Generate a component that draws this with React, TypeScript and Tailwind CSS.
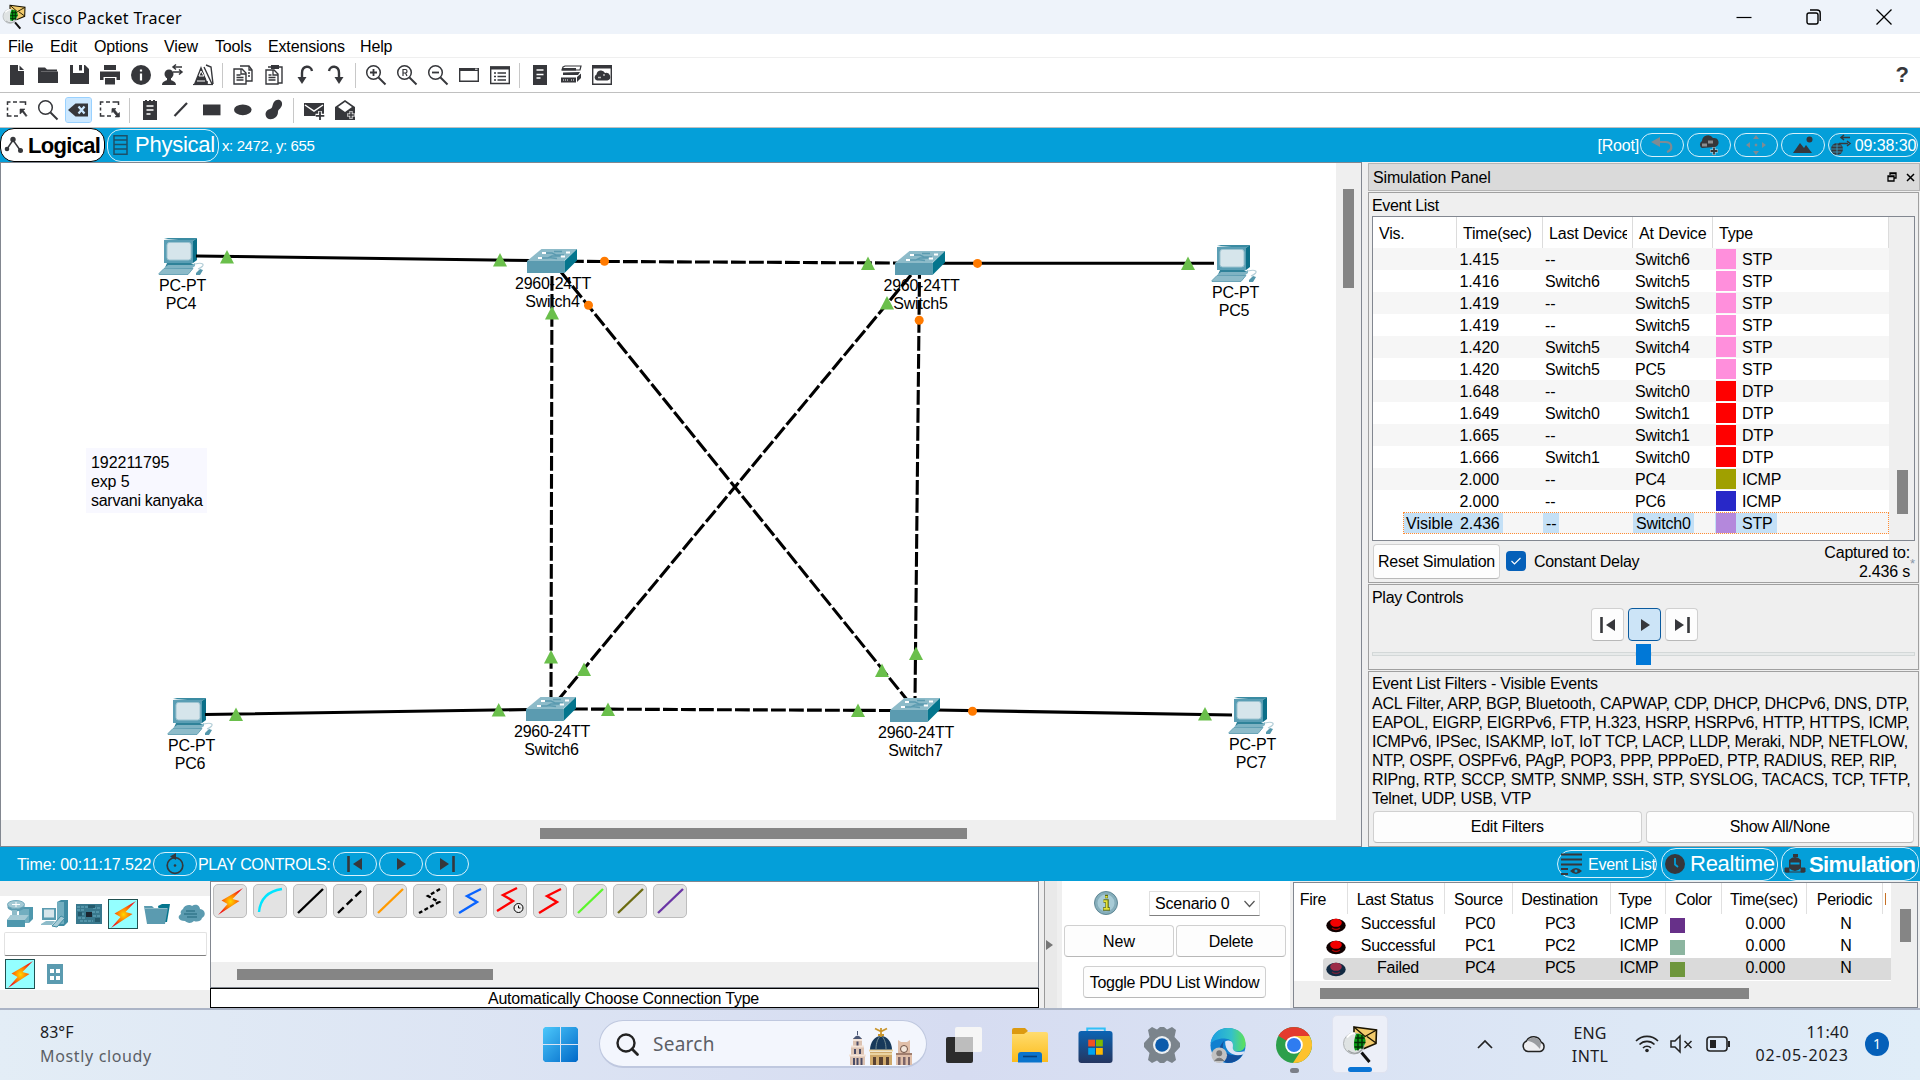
import React from "react";

const DARK = "#36373b";

type IconProps = { children: React.ReactNode; w?: number; h?: number; vb?: string };
const Svg = ({ children, w = 22, h = 22, vb = "0 0 22 22" }: IconProps) => (
  <svg width={w} height={h} viewBox={vb} fill="none" className="block shrink-0 overflow-visible">
    {children}
  </svg>
);

/* ---------- toolbar icons ---------- */
const fileIcons: React.ReactNode[] = [
  <Svg><path d="M4 1h8v6h6v14H4z" fill={DARK} /><path d="M13.500 1.500 18 6h-4.500z" fill={DARK} /></Svg>,
  <Svg><path d="M1 3.500h7l2 2h10v2H4L1 17z" fill={DARK} /><path d="M1 7.500h20V19H1z" fill={DARK} /></Svg>,
  <Svg><path d="M2 1h3v8h11V1h1l4 4v15H2z" fill={DARK} /><path d="M11 1h3v5.500h-3z" fill={DARK} /></Svg>,
  <Svg><path d="M5 1h12v5H5zM1 7.500h20V16h-3.500v-3h-13v3H1z" fill={DARK} /><path d="M6 14h10v6.500H6z" fill={DARK} /></Svg>,
  <Svg><circle cx="11" cy="11" r="10" fill={DARK} /><path d="M11 5.500v2M11 9.500v7" stroke="#fff" strokeWidth="2.200" /></Svg>,
  <Svg><circle cx="8" cy="10" r="4.500" fill={DARK} /><path d="M1 21c0-3 3-4 5-5v-3h4v3c2 1 5 2 5 5z" fill={DARK} /><path d="M12 3h9M15 .500 12 3l3 2.500M12 8h9M18 5.500 21 8l-3 2.500" stroke={DARK} strokeWidth="1.500" /></Svg>,
  <Svg><path d="M2 20 9 2l7 18z" fill={DARK} /><path d="m12 3 8 17M14 1l5 2 2 17M5 15h9M4 18h12" stroke={DARK} strokeWidth="1.400" /><path d="M7 12 9 7l3 5zM5 17h8" stroke="#fff" strokeWidth="1" /><path d="M1 20.500h20" stroke={DARK} strokeWidth="1.200" /></Svg>,
];
const editIcons: React.ReactNode[] = [
  <Svg><path d="M8 2h9l3 4v11h-6M2 5h8l4 4v11H2z" stroke={DARK} strokeWidth="1.400" /><path d="M9 5v5h5M17 2v4h3M4.500 11h4M4.500 13.500h7M4.500 16h7M16 9h2M16 12h2" stroke={DARK} strokeWidth="1.300" /></Svg>,
  <Svg><path d="M5 3h14v16h-4M3 6h8l4 4v10H3z" stroke={DARK} strokeWidth="1.400" /><path d="M8 1h8v4H8z" fill={DARK} /><path d="M10 6v5h5M5.500 11h3M5.500 13.500h7M5.500 16h7" stroke={DARK} strokeWidth="1.300" /></Svg>,
  <Svg><path d="M18 7c-1-6-10-6-10 2v6" stroke={DARK} strokeWidth="2.400" /><path d="M3.500 13h9L8 20z" fill={DARK} /></Svg>,
  <Svg><path d="M4 7c1-6 10-6 10 2v6" stroke={DARK} strokeWidth="2.400" /><path d="M9.500 13h9L14 20z" fill={DARK} /></Svg>,
];
const Lens = ({ children }: { children?: React.ReactNode }) => (
  <Svg><circle cx="8.500" cy="8.500" r="6.800" stroke={DARK} strokeWidth="1.500" /><path d="m13.500 13.500 7 7" stroke={DARK} strokeWidth="2" />{children}</Svg>
);
const viewIcons: React.ReactNode[] = [
  <Lens><path d="M5 8.500h7M8.500 5v7" stroke={DARK} strokeWidth="1.800" /></Lens>,
  <Lens><path d="M7 12V5.500h2.500q1.500 0 1.500 1.700T9.500 9H7m2.500 0L11 12" stroke={DARK} strokeWidth="1.200" /></Lens>,
  <Lens><path d="M5 8.500h7" stroke={DARK} strokeWidth="1.800" /></Lens>,
  <Svg><path d="M1.700 4.700h18.600v12.600H1.700z" stroke={DARK} strokeWidth="1.400" /><path d="M1 4h20v3H1z" fill={DARK} /><path d="M17 5.200h2.500" stroke="#fff" /></Svg>,
  <Svg><path d="M1.700 3h18.600v16.500H1.700z" stroke={DARK} strokeWidth="1.400" /><path d="M1 2.500h20V5.500H1z" fill={DARK} /><path d="M5 9h2M5 12.500h2M5 16h2M8.500 9H17M8.500 12.500H17M8.500 16H17" stroke={DARK} strokeWidth="1.700" /></Svg>,
];
const deviceIcons: React.ReactNode[] = [
  <Svg><path d="M4 1h14v20H4z" fill={DARK} /><path d="M7.500 6h7M7.500 10.500h7M7.500 14h4" stroke="#fff" strokeWidth="1.500" /></Svg>,
  <Svg><path d="m3 3 2-1h16l-1 4H2z" stroke={DARK} strokeWidth="1.200" /><path d="M2 4h14v2.500H2z" fill={DARK} /><path d="m3 8.500 17-.5-2 3H3z" fill={DARK} /><path d="M1 13.500h15v5H1zM17 13l4-3.500v4.500l-4 4z" fill={DARK} /><path d="M3 16h6M11 16h4" stroke="#fff" strokeDasharray="1 1" /></Svg>,
  <Svg><path d="M1.700 1.700h18.600v18.600H1.700z" stroke={DARK} strokeWidth="1.400" /><path d="M1 1h20v3.500H1z" fill={DARK} /><path d="M6 16.500a3.200 3.200 0 0 1-.5-6 4.500 4.500 0 0 1 8.500-1.500 3.800 3.800 0 0 1 2.500 7.500z" fill={DARK} /><path d="M7 13.500h3M12 11h2" stroke="#bbb" strokeWidth="1.500" /></Svg>,
];
const Marquee = ({ d }: { d: string }) => (
  <Svg><path d="M1.500 6V3h3M7 3h4M13.500 3h6v3M1.500 8.500v3M1.500 14v3h4M8 17h4" stroke={DARK} strokeWidth="1.500" /><path d={d} fill={DARK} stroke={DARK} strokeWidth=".6" /></Svg>
);
const selectIcons: React.ReactNode[] = [
  <Marquee d="M14 10h5l-1.600 1.600 3.600 5-1 1-3.600-4.600L14 15z" />,
  <Lens />,
  <Svg><path d="M7.500 4.500H20v13H7.500L0 11z" fill={DARK} /><path d="m10.500 7.500 6 7M16.500 7.500l-6 7" stroke="#cce8ff" strokeWidth="2.200" /></Svg>,
  <Marquee d="M13 9.500h4l-1.300 1.300 3.300 4L20.500 13.500v4.500h-4.500l1.300-1.500-3.300-4-1.200 1.200z" />,
];
const drawIcons: React.ReactNode[] = [
  <Svg><path d="M4 2h2V1h2v1h2V1h2v1h2V1h2v1h2v19H4z" fill={DARK} /><path d="M7.500 7h7M7.500 11h7M7.500 15h4" stroke="#fff" strokeWidth="1.400" /></Svg>,
  <Svg><path d="M4.500 17 17 4" stroke={DARK} strokeWidth="2.200" /></Svg>,
  <Svg><path d="M2 5.500h17.500v10.800H2z" fill={DARK} /></Svg>,
  <Svg><ellipse cx="10.800" cy="10.800" rx="8.800" ry="5.400" fill={DARK} /></Svg>,
  <Svg><path d="M11 3c3-4 9-2 8 3-1 4-4 4-4 7 0 6-7 9-11 6-3-4-1-8 3-9 3-1 2-4 4-7z" fill={DARK} /></Svg>,
];
const pduIcons: React.ReactNode[] = [
  <Svg><path d="M1 4h20v13H1z" fill={DARK} /><path d="m2 6 9 6 9-6" stroke="#fff" strokeWidth="1.500" /><path d="M17 12v9M12.500 16.500h9" stroke="#fff" strokeWidth="3.600" /><path d="M17 12.500v8.500M12.800 16.800h8.500" stroke={DARK} strokeWidth="1.800" /></Svg>,
  <Svg><path d="M1 8 11 1l10 7v13H1z" fill={DARK} /><path d="m11 3 7 5-7 5-7-5z" fill="#fff" /><path d="M17 12v8M13 16h8" stroke="#fff" strokeWidth="3" /><path d="M17 12.500v7M13.500 16h7" stroke={DARK} strokeWidth="1.500" /></Svg>,
];

const Cells = ({ items, active = -1 }: { items: React.ReactNode[]; active?: number }) => (
  <>
    {items.map((it, i) => (
      <div key={i} className="flex h-full w-[31px] items-center justify-center">
        <div className={i === active ? "flex h-[24px] w-[25px] items-center justify-center rounded-[2px] bg-[#cce8ff] outline outline-[#99d1ff]" : ""}>{it}</div>
      </div>
    ))}
  </>
);
const Sep = () => <div className="mx-[4px] h-[25px] w-px bg-[#c8c8c8]" />;

const TracerLogo = ({ w, h }: { w: number; h: number }) => (
  <Svg w={w} h={h} vb="0 0 34 36">
    <path d="M11 .500 33.500 3.500 33 17l-12 5-10-8z" fill="#f2cb6c" stroke="#1b1400" strokeWidth="1.600" />
    <path d="m11 .500 11 9.500L33.500 3.500M24 10l9 6.500" stroke="#1b1400" strokeWidth="1.400" />
    <circle cx="11" cy="17" r="10.500" fill="#dfe3e3" stroke="#aeb2b4" />
    <path d="M4 11q4-5 8-4" stroke="#fff" strokeWidth="2" />
    <path d="M13 7.500c4-1 9 1 9.500 6.500 0 5-4 9-10.500 10-2-5-1-11 1-16.500z" fill="#0a9a16" />
    <path d="M12.500 11.500h9M11.500 16h11M11.500 20.500h9M15 8v16M19 8.500v14" stroke="#032d05" strokeWidth="1.400" />
    <path d="M5 24q8 6 14-1" stroke="#9ea2a4" strokeWidth="1.200" />
    <path d="m18.500 26 8 9.500" stroke="#111" strokeWidth="3" />
  </Svg>
);

const PrevIcon = () => <Svg w={20} h={18} vb="0 0 20 18"><path d="M3.500 1v16" stroke={DARK} strokeWidth="2.600" /><path d="M17 3v12L8 9z" fill={DARK} /></Svg>;
const PlayIcon = () => <Svg w={20} h={18} vb="0 0 20 18"><path d="M6 3v12l9-6z" fill={DARK} /></Svg>;
const NextIcon = () => <Svg w={20} h={18} vb="0 0 20 18"><path d="M16.500 1v16" stroke={DARK} strokeWidth="2.600" /><path d="M3 3v12l9-6z" fill={DARK} /></Svg>;

/* ---------- topology ---------- */
const Pc = ({ x, y, name, dx = 1 }: { x: number; y: number; name: string; dx?: number }) => (
  <g transform={`translate(${x} ${y})`}>
    <path d="m5 1 4-1h29l-4 3z" fill="#3a8ba2" />
    <path d="M38 0v22l-4 3V3z" fill="#0b6f88" />
    <rect x="5" y="2" width="29" height="23" fill="#5a9eb4" />
    <rect x="8" y="4.500" width="24" height="17.500" rx="2.500" fill="#d6e5eb" stroke="#9cc3d0" />
    <path d="M8 25h24l4 2-3 2.500H6z" fill="#2f8299" />
    <path d="m5 30 4-3h24l3-2v3l-4 3z" fill="#7fb3c3" />
    <path d="m0 35.500 5-5h29l-5 6H0z" fill="#8dbbc9" stroke="#5497ac" strokeWidth=".8" />
    <path d="M36 26c8-2 12 1 3 5" fill="none" stroke="#b5cfd8" strokeWidth="1.200" />
    <path d="m37 35 4-4 3 1-3 5h-4z" fill="#5497ac" />
    <text x={22.500 + dx} y={53} textAnchor="middle" className="tracking-[-0.2px]">PC-PT</text>
    <text x={21 + dx} y={71} textAnchor="middle" className="tracking-[-0.2px]">{name}</text>
  </g>
);
const SwitchNode = ({ x, y }: { x: number; y: number }) => (
  <g transform={`translate(${x} ${y})`}>
    <path d="M0 12 14.500 0H50L37 12z" fill="#8dbbc9" />
    <path d="M0 12h37.500v12H0z" fill="#5b9bb0" />
    <path d="M37.500 12 50 0v11.500L37.500 24z" fill="#04758d" />
    <path d="m17 4 8 0 4 2h8M13 9h8l4-2h8M27 2.500h8M22 8.500l8 1" stroke="#5b9bb0" strokeWidth="1.500" fill="none" />
    <path d="m15 4 4 0M11 9h4M39 3.500h4M34 7.500h4" stroke="#fff" strokeWidth="1.800" />
  </g>
);
const up = [[227, 257], [500, 260], [552, 313], [868, 263.5], [887, 303], [1188, 263.5], [236, 714.5], [498.7, 710], [608, 709.500], [551, 657], [584, 669.500], [858, 710.500], [882, 670.500], [916, 653.500], [1205, 714]];
const dots = [[604.5, 261.3], [588.5, 305.3], [977.5, 263.4], [919.2, 320.3], [972.5, 711.2]];

const Topology = () => (
  <svg width="1335" height="657" viewBox="1 163 1335 657" className="block shrink-0 bg-white font-['Liberation_Sans',sans-serif] text-[16px]">
    <Pc x={159} y={238} name="PC4" />
    <Pc x={1212} y={245} name="PC5" />
    <Pc x={168} y={698} name="PC6" />
    <Pc x={1229} y={697} name="PC7" />
    <g textAnchor="middle" className="tracking-[-0.25px]">
      <text x="553" y="288.500">2960-24TT</text><text x="552.500" y="306.500">Switch4</text>
      <text x="921.500" y="290.500">2960-24TT</text><text x="920.500" y="308.500">Switch5</text>
      <text x="552" y="736.500">2960-24TT</text><text x="551.500" y="754.500">Switch6</text>
      <text x="916" y="737.500">2960-24TT</text><text x="915.500" y="755.500">Switch7</text>
    </g>
    <g stroke="#000" strokeWidth="3.100">
      <path d="M196 256 530 260.500M940 263.300h274M205 714.500 530 709.500M936 710l296 5" />
      <g strokeDasharray="14.800 3.200">
        <path d="M569 261.300 898 263" /><path d="M573 709 892 710.500" />
        <path d="M552 267 551 699" strokeDashoffset="9" /><path d="M919.500 273 915 700" strokeDashoffset="9" />
        <path d="M561 272 908 701" /><path d="M911 275 558 700" />
      </g>
    </g>
    <SwitchNode x={527} y={249} /><SwitchNode x={895} y={251} />
    <SwitchNode x={526} y={697} /><SwitchNode x={890} y={698} />
    {up.map(([x, y], i) => <path key={i} d={`M${x} ${y - 7}l7 13.500h-14z`} fill="#6abf4b" />)}
    {dots.map(([x, y], i) => <circle key={i} cx={x} cy={y} r="4.500" fill="#ff7a00" />)}
    <rect x="86" y="448" width="121" height="65" fill="#f8f8ff" />
    <g>
      <text x="91" y="468" className="tracking-[-0.05px]">192211795</text><text x="91" y="487" className="tracking-[-0.15px]">exp 5</text><text x="91" y="506" className="tracking-[-0.27px]">sarvani kanyaka</text>
    </g>
  </svg>
);

/* ---------- simulation panel ---------- */
const PINK = "#ff8fdc", RED = "#ff0000";
const events: [string, string, string, string, string][] = [
  ["1.415", "--", "Switch6", PINK, "STP"],
  ["1.416", "Switch6", "Switch5", PINK, "STP"],
  ["1.419", "--", "Switch5", PINK, "STP"],
  ["1.419", "--", "Switch5", PINK, "STP"],
  ["1.420", "Switch5", "Switch4", PINK, "STP"],
  ["1.420", "Switch5", "PC5", PINK, "STP"],
  ["1.648", "--", "Switch0", RED, "DTP"],
  ["1.649", "Switch0", "Switch1", RED, "DTP"],
  ["1.665", "--", "Switch1", RED, "DTP"],
  ["1.666", "Switch1", "Switch0", RED, "DTP"],
  ["2.000", "--", "PC4", "#a0a000", "ICMP"],
  ["2.000", "--", "PC6", "#2828c8", "ICMP"],
];
const filterLines: [string, string][] = [
  ["ACL Filter, ARP, BGP, Bluetooth, CAPWAP, CDP, DHCP, DHCPv6, DNS, DTP,", "tracking-[-0.2px]"],
  ["EAPOL, EIGRP, EIGRPv6, FTP, H.323, HSRP, HSRPv6, HTTP, HTTPS, ICMP,", "tracking-[-0.29px]"],
  ["ICMPv6, IPSec, ISAKMP, IoT, IoT TCP, LACP, LLDP, Meraki, NDP, NETFLOW,", "tracking-[-0.28px]"],
  ["NTP, OSPF, OSPFv6, PAgP, POP3, PPP, PPPoED, PTP, RADIUS, REP, RIP,", "tracking-[-0.29px]"],
  ["RIPng, RTP, SCCP, SMTP, SNMP, SSH, STP, SYSLOG, TACACS, TCP, TFTP,", "tracking-[-0.25px]"],
  ["Telnet, UDP, USB, VTP", "tracking-[-0.28px]"],
];
const btn = "flex items-center justify-center rounded-[4px] border border-[#d0d0d0] border-b-[#b8b8b8] bg-[#fdfdfd] whitespace-nowrap";

const EventRow = ({ e, shade }: { e: string[]; shade: boolean }) => (
  <div className={`flex h-[22px] w-[516px] items-center leading-[22px] ${shade ? "bg-[#f6f6f6]" : "bg-white"}`}>
    <div className="w-[126px] pt-px text-right tracking-[-0.1px]">{e[0]}</div>
    <div className="w-[90px] pt-px pl-[46px] whitespace-nowrap">{e[1]}</div>
    <div className="w-[127px] pt-px pl-[46px] whitespace-nowrap">{e[2]}</div>
    <div className="h-[20px] w-[20px]" style={{ background: e[3] }} />
    <div className="pt-px pl-[6px]">{e[4]}</div>
  </div>
);

const SimulationPanel = () => (
  <div className="flex w-[552px] flex-col bg-[#efefef] tracking-[-0.2px]">
    <div className="mt-px flex h-[28px] items-center border border-[#b5b5b5] bg-[#dadada] pl-[4px]">
      <span className="flex-1 pt-[2px] tracking-[-0.15px]">Simulation Panel</span>
      <Svg w={10} h={10} vb="0 0 10 10"><path d="M3 3V1h6v5H7M1 4h6v5H1zM3 1.500h6M1 4.500h6" stroke="#000" strokeWidth="1.300" /></Svg>
      <div className="mr-[4px] ml-[9px]"><Svg w={9} h={9} vb="0 0 9 9"><path d="m1 1 7 7M8 1 1 8" stroke="#000" strokeWidth="1.500" /></Svg></div>
    </div>
    <div className="mt-[1px] mr-[1px] flex h-[391px] flex-col border border-[#a0a0a0] px-[3px]">
      <div className="h-[23px] leading-[25px] tracking-[-0.35px]">Event List</div>
      <div className="flex h-[325px] border border-[#828790]">
        <div className="flex w-[516px] flex-col bg-white">
          <div className="flex h-[31px] shrink-0 items-center leading-[34px]">
            <div className="h-full w-[84px] border-r border-[#dcdcdc] pl-[6px]">Vis.</div>
            <div className="h-full w-[86px] border-r border-[#dcdcdc] pl-[6px]">Time(sec)</div>
            <div className="h-full w-[90px] border-r border-[#dcdcdc] pr-[5px] pl-[6px] whitespace-nowrap"><div className="overflow-hidden">Last Device</div></div>
            <div className="h-full w-[80px] border-r border-[#dcdcdc] pl-[6px] tracking-[-0.1px] whitespace-nowrap">At Device</div>
            <div className="h-full w-[176px] border-r border-[#dcdcdc] pl-[6px]">Type</div>
          </div>
          {events.map((e, i) => <EventRow key={i} e={e} shade={i % 2 === 0} />)}
          <div className="ml-[30px] flex h-[22px] items-center border border-dotted border-[#ff8c32] bg-[#f6f6f6] leading-[21px] whitespace-nowrap">
            <div className="flex h-[20px] w-[99px] bg-[#c4e0f6] pl-[2px]"><span className="w-[54px] tracking-[0px]">Visible</span><span className="tracking-[-0.1px]">2.436</span></div>
            <div className="ml-[40px] h-[20px] w-[16px] bg-[#c4e0f6] pl-[3px]">--</div>
            <div className="ml-[74px] h-[20px] w-[61px] bg-[#c4e0f6] pl-[3px]">Switch0</div>
            <div className="ml-[21px] flex h-[20px] w-[62px] bg-[#c4e0f6] pl-[1px]"><span className="mr-[6px] h-[20px] w-[20px] bg-[#b488dc]" />STP</div>
          </div>
        </div>
        <div className="flex flex-1 justify-center pt-[253px]"><div className="ml-px h-[44px] w-[11px] bg-[#858585]" /></div>
      </div>
      <div className="flex items-start">
        <div className={`${btn} mt-[3px] ml-px h-[35px] w-[127px] pt-px tracking-[-0.25px]`}>Reset Simulation</div>
        <div className="mt-[10px] ml-[6px] flex h-[20px] w-[20px] items-center justify-center rounded-[4px] bg-[#0560b9]">
          <Svg w={12} h={10} vb="0 0 12 10"><path d="m1.500 5 3 3L10.500 2" stroke="#fff" strokeWidth="1.100" /></Svg>
        </div>
        <div className="ml-[8px] flex-1 pt-[10px] leading-[22px] tracking-[-0.3px]">Constant Delay</div>
        <div className="mt-[2px] text-right leading-[19px]">Captured to:<br />2.436 s</div>
        <div className="mt-[15px] w-[5px] text-[13px] leading-[16px] text-[#8a97a8]">*</div>
      </div>
    </div>
    <div className="mt-px mr-px flex h-[86px] flex-col border border-[#a0a0a0] px-[3px]">
      <div className="h-[23px] leading-[26px] tracking-[-0.3px]">Play Controls</div>
      <div className="flex justify-center gap-[4px] pl-[2px]">
        <div className={`${btn} h-[33px] w-[33px]`}><PrevIcon /></div>
        <div className="flex h-[33px] w-[33px] items-center justify-center rounded-[4px] border border-[#0a5a9e] bg-[#cce4f7]"><PlayIcon /></div>
        <div className={`${btn} h-[33px] w-[33px]`}><NextIcon /></div>
      </div>
      <div className="flex h-[26px] items-center">
        <div className="h-[4px] flex-1 border border-[#d3d8d8] bg-[#e7eaea]" />
        <div className="h-[21px] w-[15px] bg-[#0078d7]" />
        <div className="h-[4px] w-[264px] border border-[#d3d8d8] bg-[#e7eaea]" />
      </div>
    </div>
    <div className="mt-px mr-px flex h-[176px] flex-col border border-[#a0a0a0] px-[3px]">
      <div className="h-[22px] leading-[24px] tracking-[-0.2px]">Event List Filters - Visible Events</div>
      <div className="h-[117px]">
        {filterLines.map(([l, t]) => <div key={l} className={`h-[19px] leading-[20px] whitespace-nowrap ${t}`}>{l}</div>)}
      </div>
      <div className="flex gap-[4px] px-px">
        <div className={`${btn} h-[32px] flex-1 tracking-[-0.2px]`}>Edit Filters</div>
        <div className={`${btn} h-[32px] flex-1 tracking-[-0.3px]`}>Show All/None</div>
      </div>
    </div>
  </div>
);

/* ---------- bottom palette ---------- */
const Bolt = () => (
  <Svg w={27} h={27} vb="0 0 27 27">
    <defs><radialGradient id="bolt"><stop offset="0" stopColor="#ffd800" /><stop offset=".5" stopColor="#ff7a00" /><stop offset="1" stopColor="#f01818" /></radialGradient></defs>
    <path d="M26 0 15.500 11l7 2L1 27l9.500-11-6-3.500z" fill="url(#bolt)" />
  </Svg>
);
const cables: React.ReactNode[] = [
  <Bolt />,
  <path d="M2 25Q4 5 25 2" stroke="#00e5ff" />,
  <path d="M1 26 26 2" stroke="#000" />,
  <path d="M1 26 26 2" stroke="#000" strokeDasharray="8 4" />,
  <path d="M1 26 26 2" stroke="#ff9a00" />,
  <path d="M23 2 11 9l11 6L2 26" stroke="#000" strokeDasharray="4 2.500" />,
  <path d="M24 2 10 9l10 6L2 26" stroke="#0a64ff" />,
  <><path d="M20 1 6 8l10 6L0 24" stroke="#ff0000" /><circle cx="21.500" cy="21" r="4.500" fill="#eee" stroke="#000" strokeWidth="1" /><path d="M21.500 18.500V21h2" stroke="#000" strokeWidth="1" /></>,
  <path d="M24 2 10 9l10 6L2 26" stroke="#ff0000" />,
  <path d="M1 26 26 2" stroke="#5cf52c" />,
  <path d="M1 26 26 2" stroke="#6b6b10" />,
  <path d="M1 26 26 2" stroke="#6a35a5" />,
];
const cell = "flex items-center justify-center";

const Palette = () => (
  <div className="flex w-[210px] flex-col bg-[#efefef] pt-[15px]">
    <div className="flex h-[94px] flex-col bg-white">
      <div className="mt-[3px] flex h-[30px] items-center pl-[5px]">
        <div className={`${cell} w-[30px]`}>
          <Svg w={28} h={28} vb="0 0 28 28"><path d="M13 9 17 7h10v12l-4 4H13z" fill="#4e97ad" /><path d="M13 9h10v14H13z" fill="#72aec0" /><path d="m1 20 4-5h18l-4 5v7H1z" fill="#4e97ad" /><path d="m1 20 4-5h18l-4 5z" fill="#a5cad5" /><ellipse cx="10" cy="4.500" rx="8.500" ry="4" fill="#a5cad5" stroke="#5b9bb0" strokeWidth=".8" /><path d="M1.500 5c2 5 15 5 17 0v2.500c-2 5-15 5-17 0z" fill="#5b9bb0" /><path d="m6 4.500 8 0M10 2v5" stroke="#fff" /><path d="M6 10h5v5H6z" fill="#8dbbc9" /></Svg>
        </div>
        <div className={`${cell} ml-[5px] w-[30px]`}>
          <Svg w={28} h={28} vb="0 0 28 28"><path d="m16 2 4-2h7v22l-4 4h-7z" fill="#3f8ba2" /><path d="M16 2h7v22h-7z" fill="#72aec0" /><path d="M1 8h14v12H1z" fill="#5b9bb0" /><path d="M3 9.500h10v8H3z" fill="#d6e5eb" /><path d="m0 24 5-3h9l-3 4H0z" fill="#8dbbc9" /><path d="m11 26 9-10 4 2-8 9z" fill="#a5cad5" stroke="#3f8ba2" /></Svg>
        </div>
        <div className={`${cell} ml-[4px] w-[30px]`}>
          <Svg w={26} h={20} vb="0 0 26 20"><path d="M0 0h26v20H0z" fill="#38788d" /><path d="M1 3h13M1 6h7M17 4h7M16 8h8M2 10h6M17 12h7M2 14h8M4 17h13" stroke="#6fb0c4" strokeDasharray="3 1" /><path d="M10 8h6v5h-6z" fill="#1b2530" /><path d="M12 1h7v3h-7zM2 8h4v4H2zM19 14h5v4h-5z" fill="#245a6c" /></Svg>
        </div>
        <div className={`${cell} ml-[4px] h-[30px] w-[30px] border border-[#205050] bg-[#94ffff]`}><Bolt /></div>
        <div className={`${cell} ml-[4px] w-[30px]`}>
          <Svg w={26} h={20} vb="0 0 26 20"><path d="M14 2 18 0h8l-3 18h-6z" fill="#04758d" /><path d="M0 2h8l2 2h14L21 20H3z" fill="#5b9bb0" /><path d="M1 4.500h22" stroke="#8dbbc9" /></Svg>
        </div>
        <div className={`${cell} ml-[4px] w-[30px]`}>
          <Svg w={27} h={20} vb="0 0 27 20"><path d="M5 5c1-4 7-5 9-3 4-3 8 0 8 3 6 1 6 7 2 9-1 4-6 4-8 3-3 3-7 2-9 0-7 0-8-5-4-7-1-2 0-4 2-5z" fill="#5b9bb0" /><path d="M8 7h9M6 10h13M9 13h10" stroke="#35788c" strokeWidth="1.400" /></Svg>
        </div>
      </div>
      <div className="mt-[3px] ml-[4px] h-[24px] w-[203px] rounded-[2px] border border-[#e2e2e2] border-b-[#808080] bg-white" />
      <div className="mt-[3px] flex h-[30px] items-center pl-[5px]">
        <div className={`${cell} h-[30px] w-[30px] border border-[#205050] bg-[#94ffff]`}><Bolt /></div>
        <div className="ml-[12px]"><Svg w={16} h={20} vb="0 0 16 20"><path d="M0 0h16v20H0z" fill="#5b9bb0" /><path d="M3 5h4v4H3zM9 5h4v4H9zM3 12h4v4H3zM9 12h4v4H9z" fill="#fff" /></Svg></div>
      </div>
    </div>
  </div>
);

const pdus = [
  ["Successful", "PC0", "PC3", "#673089"],
  ["Successful", "PC1", "PC2", "#8cb5a0"],
  ["Failed", "PC4", "PC5", "#6e963c"],
];
const heads: [string, string][] = [["Fire", "w-[54px] pr-[15px]"], ["Last Status", "w-[97px] pr-[2px]"], ["Source", "w-[68px]"], ["Destination", "w-[98px] pr-[4px]"], ["Type", "w-[55px] pr-[6px]"], ["Color", "w-[56px]"], ["Time(sec)", "w-[85px]"], ["Periodic", "w-[76px]"]];

const PduTable = () => (
  <div className="mt-px flex h-[126px] w-[625px] border border-[#828790] bg-[#efefef] text-[16px] tracking-[-0.3px]">
    <div className="flex w-[597px] flex-col">
      <div className="flex h-[31px] overflow-hidden bg-white leading-[33px]">
        {heads.map(([h, w]) => <div key={h} className={`shrink-0 border-r border-[#e0e0e0] text-center whitespace-nowrap ${w}`}>{h}</div>)}
        <div className="w-[3px] overflow-hidden pl-[1px]">I</div>
      </div>
      <div className="h-[67px] bg-white">
        {pdus.map((p, i) => (
          <div key={i} className="flex h-[22px] items-center leading-[19px]">
            <div className="w-[29px]" />
            <div className={`flex h-[22px] flex-1 ${i === 2 ? "rounded-l-[3px] bg-[#dadada]" : ""}`}>
              <div className="w-[25px] pt-[4px] pl-[3px]">
                <Svg w={20} h={15} vb="0 0 20 15"><ellipse cx="10" cy="7.500" rx="9.700" ry="6.800" fill={i === 2 ? "#122a42" : "#100000"} /><ellipse cx="10" cy="4.800" rx="5.800" ry="4" fill={i === 2 ? "#9c2c48" : "#f20000"} /><path d="M6 10q4 3 8 0" stroke={i === 2 ? "#6d2238" : "#a00"} strokeWidth="1.500" /></Svg>
              </div>
              <div className="w-[97px] pl-[3px] text-center">{p[0]}</div>
              <div className="w-[68px] pl-[2px] text-center">{p[1]}</div>
              <div className="w-[98px] pr-[4px] text-center">{p[2]}</div>
              <div className="w-[55px] pl-[1px] text-center">ICMP</div>
              <div className="w-[56px] pt-[4px] pl-[4px]"><div className="h-[15px] w-[15px]" style={{ background: p[3] }} /></div>
              <div className="w-[85px] pl-[2px] text-center tracking-[0px]">0.000</div>
              <div className="w-[76px] pl-[2px] text-center">N</div>
            </div>
          </div>
        ))}
      </div>
      <div className="flex flex-1 items-start pt-[7px] pl-[26px]"><div className="h-[11px] w-[429px] bg-[#858585]" /></div>
    </div>
    <div className="pt-[26px] pl-[9px]"><div className="h-[33px] w-[11px] bg-[#858585]" /></div>
  </div>
);

const pill = "flex items-center justify-center rounded-full border border-[#d8f1fb] shrink-0";

/* ---------- taskbar ---------- */
const Castle = () => (
  <Svg w={64} h={38} vb="0 0 64 38">
    <path d="M1 38V29h1v-9h2v-9h9v9h2v9h1v9z" fill="#dcc3b2" /><path d="M4 12q4.500-7 9 0z" fill="#4b5876" /><path d="M8.500 4v4" stroke="#4b5876" /><path d="M2 19.500h13M0 28.500h17M4 13h9" stroke="#f4e4d8" strokeWidth="2" />
    <path d="M5 22h2v5H5zM10 22h2v5h-2zM4 31h2v7H4zM7.500 31h2v7h-2zM11.500 31h2v7h-2zM7.500 14.500h2v4h-2z" fill="#4a4c66" />
    <path d="M21 38V25h22v13z" fill="#cfa96b" /><path d="M21 23c0-8 5-14 11-14s11 6 11 14z" fill="#17395a" /><path d="M27 22c0-6 2-12 5-13 3 1 5 7 5 13" stroke="#8aa0a0" strokeWidth=".8" /><path d="M20 23.500h24M21 27h22" stroke="#ead3a0" strokeWidth="1.800" />
    <path d="M32 1v9M26 1.500l6 3 6-3M29 8h6" stroke="#c9962e" strokeWidth="1.800" /><path d="M24 30h3v8h-3zM30 30h4v8h-4zM37 30h3v8h-3z" fill="#5a4231" />
    <path d="M47 38V26h2V13l3 2h6l3-2v13h2v12z" fill="#e0bfa9" /><path d="M47 27h16" stroke="#8d6a5c" strokeWidth="1.500" /><circle cx="55" cy="22" r="3.500" fill="#f3e6da" stroke="#6f5143" /><path d="M49 30h2.500v8H49zM54 30h2.500v8H54zM59 30h2v8h-2z" fill="#7b6468" />
  </Svg>
);
const apps: React.ReactNode[] = [
  <Svg w={36} h={36} vb="0 0 36 36"><rect x="9" y="0" width="27" height="25" rx="2" fill="#f6f6f6" /><rect x="0" y="10" width="27" height="26" rx="2" fill="#2c2c2c" /><path d="M9 10h18v15H9z" fill="#bdbdbd" /></Svg>,
  <Svg w={36} h={36} vb="0 0 36 36"><defs><linearGradient id="folder" x2="0" y2="1"><stop stopColor="#ffdc6e" /><stop offset="1" stopColor="#fcbc1c" /></linearGradient></defs><path d="M0 5h34q2 0 2 2v28H0z" fill="url(#folder)" /><path d="M0 3q0-2 2-2h11l3 3-4 3H0z" fill="#dc9a10" /><path d="M6 35.500V28q0-3 3-3h18q3 0 3 3v7.500z" fill="#0a74cc" /><path d="M11 29.500h14" stroke="#043f7a" strokeWidth="1.600" /></Svg>,
  <Svg w={36} h={36} vb="0 0 36 37"><defs><linearGradient id="store" x2="0" y2="1"><stop stopColor="#0b64b4" /><stop offset="1" stopColor="#253660" /></linearGradient></defs><path d="M9 6V1.500h18V6" stroke="#30c0f8" strokeWidth="2" /><rect y="4" width="35" height="33" rx="3" fill="url(#store)" /><path d="M10 13h7v7h-7z" fill="#f25022" /><path d="M18 13h7v7h-7z" fill="#7fba00" /><path d="M10 21.500h7v7h-7z" fill="#00a4ef" /><path d="M18 21.500h7v7h-7z" fill="#ffb900" /></Svg>,
  <Svg w={36} h={36} vb="0 0 36 36"><path d="m8 0 5 2.500L16 0h4l3 2.500L28 0l4 3-1.500 7 5.500 6v4l-5.500 6L32 33l-4 3-5-2.500L20 36h-4l-3-2.500L8 36l-4-3 1.500-7L0 20v-4l5.500-6L4 3z" fill="#7b848c" /><circle cx="18" cy="18" r="9" fill="#eceff2" /><circle cx="18" cy="18" r="6.800" fill="#0c5bab" /></Svg>,
  <Svg w={37} h={37} vb="0 0 37 38"><defs><linearGradient id="edge"><stop stopColor="#1b9de2" /><stop offset=".6" stopColor="#35c1c8" /><stop offset="1" stopColor="#5ee255" /></linearGradient></defs><circle cx="18" cy="19" r="18" fill="#1180d0" /><path d="M0 17C2 6 9 1 18 1c11 0 18 7 18 16 0 6-5 9-10 8-4-1-4-3-3-6 0-4-3-7-7-7-7-1-13 2-16 5z" fill="url(#edge)" /><path d="M14 14c-5 10 4 18 19 14-3 6-9 9-15 9-10-2-13-14-4-23z" fill="#124f9c" /><path d="M15 15c5-3 9 1 8 5-1 5 4 7 12 5l-1 3c-9 3-19-1-19-13z" fill="#dce3f6" /><circle cx="9" cy="29" r="8" fill="#c2c2c2" /><circle cx="9" cy="27" r="3" fill="#777" /><path d="M4 35q5-6 10 0" fill="#777" stroke="#777" /></Svg>,
  <Svg w={36} h={36} vb="0 0 36 36"><circle cx="18" cy="18" r="18" fill="#2c9f4b" /><path d="M18 18 2.500 9A18 18 0 0 1 33.500 9z" fill="#e33b2e" /><path d="M2.500 9A18 18 0 0 1 33.500 9H18z" fill="#e33b2e" /><path d="M18 9h15.500A18 18 0 0 1 17 36l9-14z" fill="#fdc22d" /><circle cx="18" cy="18" r="8.800" fill="#fff" /><circle cx="18" cy="18" r="7" fill="#2f7cf0" /></Svg>,
];

const Taskbar = () => (
  <div className="flex h-[72px] border-t-2 border-[#abb4c6] bg-linear-to-r from-[#e3edf6] via-[#d6dcf1] to-[#e0edf8] font-['Noto_Sans',sans-serif]">
    <div className="flex w-[543px] flex-col pt-[10px] pl-[40px] text-[16px] leading-[24px] text-[#1b1b1f]">
      <span className="tracking-[0px]">83°F</span>
      <span className="text-[#5b5f66] tracking-[0.65px]">Mostly cloudy</span>
    </div>
    <div className="w-[56px] pt-[17px]">
      <Svg w={35} h={35} vb="0 0 35 35"><defs><linearGradient id="win" x2="1" y2="1"><stop stopColor="#4cc8fb" /><stop offset="1" stopColor="#0068c8" /></linearGradient></defs><path d="M2 0h15v17H0V2zM18 0h15l2 2v15H18zM0 18h17v17H2l-2-2zM18 18h17v15l-2 2H18z" fill="url(#win)" /></Svg>
    </div>
    <div className="mt-[10px] flex h-[48px] w-[328px] items-center rounded-full border border-[#bfc8df] border-b-2 bg-[#f3f6fd]">
      <div className="ml-[15px]"><Svg w={24} h={24} vb="0 0 24 24"><circle cx="11" cy="11" r="8.500" stroke="#222" strokeWidth="2.400" /><path d="m17 17 5.500 5.500" stroke="#222" strokeWidth="2.800" strokeLinecap="round" /></Svg></div>
      <div className="ml-[14px] w-[196px] text-[19px] text-[#5c5f66] tracking-[0.25px]">Search</div>
      <div className="mt-[4px]"><Castle /></div>
    </div>
    <div className="flex w-[405px] items-start gap-[30px] pt-[17px] pl-[19px]">{apps.map((a, i) => (
      <div key={i} className="flex w-[36px] flex-col items-center">{a}{i === 5 && <div className="mt-[5px] h-[5px] w-[9px] rounded-full bg-[#7b7f88]" />}</div>
    ))}</div>
    <div className="mt-[5px] flex h-[58px] w-[56px] flex-col items-center justify-between rounded-[5px] border border-[#dfe3f0] bg-[#eceff8] pt-[10px]">
      <TracerLogo w={34} h={37} />
      <div className="h-[5px] w-[24px] rounded-full bg-[#0a74d4]" />
    </div>
    <div className="flex h-full items-center pb-[3px] text-[#1b1b1f]">
      <div className="ml-[89px]"><Svg w={16} h={10} vb="0 0 16 10"><path d="m1 9 7-7 7 7" stroke="#222" strokeWidth="1.700" /></Svg></div>
      <div className="ml-[28px]"><Svg w={25} h={18} vb="0 0 25 18"><path d="M7 16.500A5.500 5.500 0 0 1 5.500 6 8 8 0 0 1 20 7a5 5 0 0 1-1 9.500z" fill="#ededf0" stroke="#222" strokeWidth="1.500" /><path d="M6 6a8 8 0 0 1 14 2l-1 6C14 8 10 6 6 6z" fill="#9a9ca0" /></Svg></div>
      <div className="ml-[21px] w-[46px] pt-[2px] text-center text-[16px] leading-[23px]"><span className="tracking-[0.15px]">ENG</span><br /><span className="tracking-[0.35px]">INTL</span></div>
      <div className="ml-[22px]"><Svg w={24} h={19} vb="0 0 24 19"><path d="M1 7a15.500 15.500 0 0 1 22 0M4.500 10.500a10.600 10.600 0 0 1 15 0M8 14a5.600 5.600 0 0 1 8 0" stroke="#222" strokeWidth="1.600" /><circle cx="12" cy="16.500" r="1.800" fill="#222" /></Svg></div>
      <div className="ml-[11px]"><Svg w={24} h={18} vb="0 0 24 18"><path d="M1 6v6h4l5 5V1L5 6z" stroke="#222" strokeWidth="1.500" /><path d="m14.500 6 7 7M21.500 6l-7 7" stroke="#222" strokeWidth="1.500" /></Svg></div>
      <div className="ml-[12px]"><Svg w={25} h={16} vb="0 0 25 16"><rect x="1" y="1" width="20" height="14" rx="3" stroke="#222" strokeWidth="1.600" /><path d="M4 4h6v8H4z" fill="#222" /><path d="M23 5v6" stroke="#222" strokeWidth="2" /></Svg></div>
      <div className="ml-[18px] w-[100px] text-right text-[16px] leading-[23px]"><span className="tracking-[0.3px]">11:40</span><br /><span className="tracking-[1px]">02-05-2023</span></div>
      <div className="ml-[16px] flex h-[24px] w-[24px] items-center justify-center rounded-full bg-[#0560b9] text-[14px] text-white">1</div>
    </div>
  </div>
);

export default function App() {
  return (
    <div className="flex h-[1080px] w-[1920px] flex-col overflow-hidden bg-[#efefef] font-['Liberation_Sans',Arial,sans-serif] text-[16px] leading-[20px] text-black">
      {/* title bar */}
      <div className="flex h-[34px] items-center bg-[#eef3fa] pl-[2px]">
        <TracerLogo w={24} h={24} />
        <div className="ml-[6px] flex-1 pt-[2px] font-['Noto_Sans',sans-serif] text-[16px] tracking-[0.32px]">Cisco Packet Tracer</div>
        <div className="mr-[54px]"><Svg w={16} h={16} vb="0 0 16 16"><path d="M.500 8.500h15" stroke="#000" strokeWidth="1.200" /></Svg></div>
        <div className="mr-[55px]"><Svg w={15} h={16} vb="0 0 15 16"><rect x="1" y="4" width="11" height="11" rx="2" stroke="#000" strokeWidth="1.400" /><path d="M4 1h7q3.200 0 3.200 3v8" stroke="#000" strokeWidth="1.400" /></Svg></div>
        <div className="mr-[28px]"><Svg w={16} h={16} vb="0 0 16 16"><path d="m.500.500 15 15M15.500.500l-15 15" stroke="#000" strokeWidth="1.300" /></Svg></div>
      </div>
      {/* menu */}
      <div className="flex h-[24px] items-center border-b border-[#efefef] bg-white pt-[2px] pl-[8px] tracking-[-0.15px]">
        <span className="w-[42px]">File</span><span className="w-[44px]">Edit</span><span className="w-[70px]">Options</span><span className="w-[51px]">View</span><span className="w-[53px]">Tools</span><span className="w-[92px]">Extensions</span><span>Help</span>
      </div>
      <div className="flex h-[35px] items-center border-b border-[#c0c0c0] bg-white pl-[1px]">
        <Cells items={fileIcons} /><Sep /><Cells items={editIcons} /><Sep /><Cells items={viewIcons} /><Sep /><Cells items={deviceIcons} />
        <div className="flex-1" />
        <div className="mr-[11px] text-[22px] font-bold text-[#36373b]">?</div>
      </div>
      <div className="flex h-[35px] items-center border-b border-[#c0c0c0] bg-white pl-[1px]">
        <Cells items={selectIcons} active={2} /><Sep /><Cells items={drawIcons} /><Sep /><Cells items={pduIcons} />
      </div>
      {/* workspace bar */}
      <div className="flex h-[34px] shrink-0 items-center bg-[#049fd9] text-white">
        <div className="flex h-[34px] w-[105px] items-center rounded-[14px] border border-black bg-white pl-[3px] text-black">
          <Svg w={20} h={18} vb="0 0 20 18"><path d="m3 13 6-9 7 10" stroke={DARK} strokeWidth="1.500" /><circle cx="3" cy="13" r="2.300" fill={DARK} /><circle cx="9" cy="3.500" r="2.700" fill={DARK} /><circle cx="16.500" cy="14.500" r="2.500" fill={DARK} /></Svg>
          <span className="ml-[4px] pt-px text-[22px] font-bold tracking-[-0.7px]">Logical</span>
        </div>
        <div className="ml-[2px] flex h-[33px] w-[112px] items-center rounded-[14px] border border-[#d8f1fb] pl-[5px]">
          <Svg w={15} h={20} vb="0 0 15 20"><path d="M1 .700h13v18.600H1zM1 5h13M1 9.500h13M1 14h13" stroke="#1c5068" strokeWidth="1.500" /></Svg>
          <span className="ml-[7px] text-[22px] tracking-[-0.25px]">Physical</span>
        </div>
        <span className="ml-[3px] flex-1 text-[15px] tracking-[-0.4px] pt-px">x: 2472, y: 655</span>
        <span className="mr-[1px] pt-[2px] tracking-[-0.2px]">[Root]</span>
        <div className="flex items-center gap-[3px] pr-[2px]">
          <div className={`${pill} h-[24px] w-[44px]`}><Svg w={22} h={16} vb="0 0 22 16"><path d="M8 5h6c8 0 8 8 2 10" stroke="#7f8b93" strokeWidth="2.200" /><path d="M0 5 9 0v10z" fill="#7f8b93" /></Svg></div>
          <div className={`${pill} h-[24px] w-[44px]`}><Svg w={22} h={20} vb="0 0 22 20"><path d="M4 13a4 4 0 0 1 0-7 6 6 0 0 1 11-3 4.500 4.500 0 0 1 2 9z" fill={DARK} /><path d="M4 10h5M10 7h5" stroke="#8a8d90" strokeWidth="2.800" /><path d="M16 12v8M12 16h8" stroke="#c8d8e0" strokeWidth="2.800" /><path d="M16 12.500v7M12.500 16h7" stroke={DARK} strokeWidth="1.800" /></Svg></div>
          <div className={`${pill} h-[24px] w-[44px]`}><Svg w={20} h={20} vb="0 0 20 20"><path d="m10 0 3 4H7zM10 20l3-4H7zM0 10l4-3v6zM20 10l-4-3v6zM8.800 8.800h2.400v2.400H8.800z" fill="#7f8b93" /></Svg></div>
          <div className={`${pill} h-[24px] w-[44px]`}><Svg w={20} h={18} vb="0 0 20 18"><path d="m0 17 7-10 4 5 2-3 6 8z" fill={DARK} /><circle cx="16.500" cy="3.500" r="3" fill={DARK} /></Svg></div>
          <div className={`${pill} h-[24px] w-[90px]`}><Svg w={21} h={21} vb="0 0 21 21"><circle cx="7" cy="14" r="6" fill={DARK} /><path d="M1 14h12M7 8v12M2.500 11h9M2.500 17h9" stroke="#38a0c8" strokeWidth=".8" /><path d="M11 2.500h9M18 8.500h-9M14 0l-3 2.500L14 5M17 6l3 2.500-3 2.500" stroke={DARK} strokeWidth="1.500" /></Svg><span className="ml-[4px] pt-px tracking-[-0.1px]">09:38:30</span></div>
        </div>
      </div>
      {/* workspace */}
      <div className="flex h-[685px] shrink-0">
        <div className="flex w-[1362px] border border-[#828790]">
          <div className="flex w-[1335px] flex-col">
            <Topology />
            <div className="flex h-[26px] items-center pt-px pl-[539px]"><div className="h-[11px] w-[427px] bg-[#858585]" /></div>
          </div>
          <div className="pt-[26px] pl-[7px]"><div className="h-[99px] w-[11px] bg-[#858585]" /></div>
        </div>
        <div className="w-[6px]" />
        <SimulationPanel />
      </div>
      {/* simulation bar */}
      <div className="flex h-[34px] shrink-0 items-center bg-[#049fd9] text-white">
        <span className="ml-[17px] w-[136px] pt-px tracking-[-0.1px] whitespace-nowrap">Time: 00:11:17.522</span>
        <div className={`${pill} h-[24px] w-[44px]`}><Svg w={20} h={22} vb="0 0 20 22"><circle cx="10" cy="12.500" r="7.800" stroke={DARK} strokeWidth="1.700" /><circle cx="10" cy="12.500" r="1.300" fill={DARK} /><path d="M5 3.500 11 0v7z" fill={DARK} /></Svg></div>
        <span className="ml-[1px] w-[135px] pt-px tracking-[-0.35px] whitespace-nowrap">PLAY CONTROLS:</span>
        <div className={`${pill} h-[24px] w-[44px]`}><PrevIcon /></div>
        <div className={`${pill} ml-[2px] h-[24px] w-[44px]`}><PlayIcon /></div>
        <div className={`${pill} ml-[2px] h-[24px] w-[44px]`}><NextIcon /></div>
        <div className="flex-1" />
        <div className="flex h-[28px] w-[100px] items-center rounded-[14px] border border-[#d8f1fb] pl-[2px]">
          <Svg w={23} h={22} vb="0 0 23 22"><path d="M1 1.500h21M1 6.500h21M1 11.500h21M1 16h7M1 21h7" stroke={DARK} strokeWidth="2" /><path d="M10 18q6-6 12 0-6 6-12 0z" fill={DARK} /><circle cx="16" cy="18" r="1.500" fill="#049fd9" /></Svg>
          <span className="ml-[5px] pt-px tracking-[-0.25px] whitespace-nowrap">Event List</span>
        </div>
        <div className="ml-[4px] flex h-[33px] w-[117px] items-center rounded-[15px] border border-[#d8f1fb] pl-[3px]">
          <Svg w={20} h={20} vb="0 0 20 20"><circle cx="10" cy="10" r="10" fill={DARK} /><path d="M10 4v6.500l3 2.500" stroke="#049fd9" strokeWidth="1.800" /></Svg>
          <span className="ml-[5px] text-[22px] tracking-[-0.25px]">Realtime</span>
        </div>
        <div className="mr-px ml-[3px] flex h-[34px] w-[138px] items-center rounded-[15px] border border-[#d8f1fb] pl-[3px]">
          <Svg w={20} h={20} vb="0 0 20 20"><path d="M8 0h5v3H8zM4 6q6-6 12 0v8q-6 6-12 0z" fill={DARK} /><path d="M5 8h10v3H5z" fill="#049fd9" stroke={DARK} /><path d="M0 14h4v4H0zM16 14h4v4h-4zM1 18h18" fill={DARK} stroke={DARK} strokeWidth="1" /></Svg>
          <span className="ml-[4px] pt-px text-[22px] font-bold tracking-[-0.6px]">Simulation</span>
        </div>
      </div>
      {/* bottom area */}
      <div className="flex h-[127px] shrink-0">
        <Palette />
        <div className="flex w-[829px] flex-col">
          <div className="flex h-[107px] flex-col border border-[#828790] bg-white">
            <div className="flex h-[80px] gap-[6px] pt-[2px] pl-[2px]">
              {cables.map((c, i) => (
                <div key={i} className="flex h-[34px] w-[34px] shrink-0 items-center justify-center rounded-[5px] border border-[#bdbdbd] bg-[#e3e3e3]">
                  {i === 0 ? c : <Svg w={27} h={28} vb="0 0 27 28"><g strokeWidth="2.400">{c}</g></Svg>}
                </div>
              ))}
            </div>
            <div className="flex-1 bg-[#efefef] pt-[7px] pl-[26px]"><div className="h-[11px] w-[256px] bg-[#858585]" /></div>
          </div>
          <div className="flex h-[20px] items-center justify-center border border-black bg-white pt-px pr-[2px] tracking-[-0.22px]">Automatically Choose Connection Type</div>
        </div>
        <div className="ml-[5px] flex w-[13px] items-center border-l border-[#999] bg-[#e9e9e9]"><Svg w={8} h={10} vb="0 0 8 10"><path d="M1 0v10l7-5z" fill="#777" /></Svg></div>
        <div className="ml-[5px] flex w-[228px] flex-col bg-white pl-[2px]">
          <div className="flex h-[44px] items-center">
            <div className="ml-[30px]"><Svg w={24} h={24} vb="0 0 24 24"><circle cx="12" cy="12" r="11.500" fill="#86aebb" stroke="#5f8795" /><circle cx="12" cy="12" r="8.500" fill="#a8cbd6" /><path d="M9.500 10h3.500v8M9 18h7M11 5.500h3" stroke="#5d6b13" strokeWidth="3.500" /><path d="M9.500 10.200h3.200v7.600M9.500 17.800h6M11.300 5.800h2.200" stroke="#e5e23a" strokeWidth="1.800" /></Svg></div>
            <div className="ml-[31px] flex h-[25px] w-[111px] items-center justify-between border border-[#e0e0e0] border-b-[#808080] pt-px pr-[4px] pl-[5px] tracking-[-0.2px] whitespace-nowrap">Scenario 0<Svg w={11} h={8} vb="0 0 11 8"><path d="m.500 1 5 5.500 5-5.500" stroke="#555" strokeWidth="1.200" /></Svg></div>
          </div>
          <div className="flex gap-[2px]">
            <div className={`${btn} h-[32px] w-[110px] pt-px`}>New</div>
            <div className={`${btn} h-[32px] w-[110px] pt-px tracking-[-0.3px]`}>Delete</div>
          </div>
          <div className={`${btn} mt-[9px] ml-[19px] h-[32px] w-[183px] pt-px tracking-[-0.3px]`}>Toggle PDU List Window</div>
        </div>
        <div className="w-[3px]" />
        <PduTable />
      </div>
      <Taskbar />
    </div>
  );
}
